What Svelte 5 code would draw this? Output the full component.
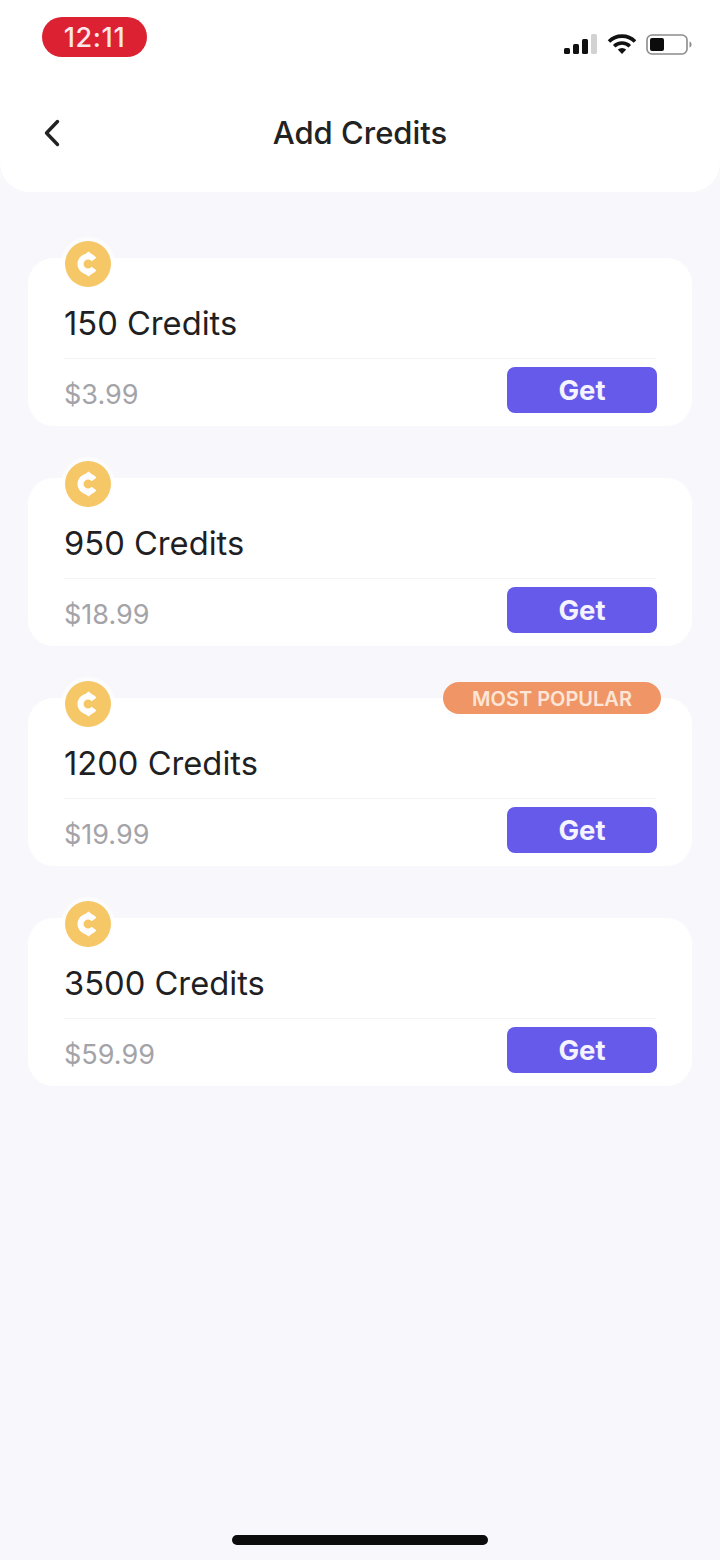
<script>
  const plans = [
    { credits: 150, price: '$3.99' },
    { credits: 950, price: '$18.99' },
    { credits: 1200, price: '$19.99', popular: true },
    { credits: 3500, price: '$59.99' }
  ];
</script>

<div class="screen">
  <header>
    <div class="status">
      <span class="time">12:11</span>
      <div class="indicators">
        <svg width="34" height="22" viewBox="0 0 34 22">
          <rect x="0" y="15" width="6" height="6" rx="1.500" fill="#111" />
          <rect x="9" y="11" width="6" height="10" rx="1.500" fill="#111" />
          <rect x="18" y="6" width="6" height="15" rx="1.500" fill="#111" />
          <rect x="27" y="1" width="6" height="20" rx="1.500" fill="#d2d2d2" />
        </svg>
        <svg width="30" height="22" viewBox="0 0 30 22">
          <path d="M2 8.500a18.500 18.500 0 0 1 26 0" fill="none" stroke="#111" stroke-width="3.600" />
          <path d="M7.200 13.200a11 11 0 0 1 15.600 0" fill="none" stroke="#111" stroke-width="3.600" />
          <path d="M10.800 16.600a6 6 0 0 1 8.400 0L15 21z" fill="#111" />
        </svg>
        <svg width="46" height="22" viewBox="0 0 46 22">
          <rect x="1" y="2" width="40" height="19" rx="5" fill="#fff" stroke="#8c8c8c" stroke-width="1.600" />
          <rect x="4" y="5" width="14" height="13" rx="2" fill="#0c0c0c" />
          <path d="M43.500 8.500c1.600.5 2 1.600 2 3s-.4 2.500-2 3z" fill="#8c8c8c" />
        </svg>
      </div>
    </div>
    <div class="nav">
      <button class="back" aria-label="Back">
        <svg width="16" height="28" viewBox="0 0 16 28">
          <path d="M13.500 2.500 2.500 14l11 11.500" fill="none" stroke="#222" stroke-width="3.400" stroke-linecap="round" stroke-linejoin="round" />
        </svg>
      </button>
      <h1>Add Credits</h1>
    </div>
  </header>

  <main>
    {#each plans as p}
      <section class="card">
        <div class="coin">
          <svg width="46" height="46" viewBox="0 0 46 46">
            <circle cx="23" cy="23" r="23" fill="#f5c766" />
            <path d="M29 18.500 A7.500 7.500 0 1 0 29 27.500" fill="none" stroke="#fff" stroke-width="6" />
            <path d="M20.500 13 23.500 10.500 26.500 13z" fill="#fff" />
            <path d="M20.500 33 23.500 35.500 26.500 33z" fill="#fff" />
          </svg>
        </div>
        {#if p.popular}
          <span class="badge">MOST POPULAR</span>
        {/if}
        <h2>{p.credits} Credits</h2>
        <div class="row">
          <span class="price">{p.price}</span>
          <button class="get">Get</button>
        </div>
      </section>
    {/each}
  </main>

  <div class="home"></div>
</div>

<style>
  :global(body) { margin: 0; background: #f8f7fb; }
  .screen {
    height: 1560px;
    display: flex;
    flex-direction: column;
    font-family: Inter, "Liberation Sans", sans-serif;
    background: #f8f7fb;
    overflow: hidden;
  }
  header {
    height: 192px;
    box-sizing: border-box;
    padding: 17px 28px 0 42px;
    background: #fff;
    border-radius: 0 0 30px 30px;
  }
  .status { display: flex; justify-content: space-between; align-items: flex-start; height: 40px; }
  .time {
    width: 105px;
    height: 40px;
    border-radius: 20px;
    background: #dc2132;
    color: #fbe6e8;
    font-size: 27px;
    font-weight: 500;
    letter-spacing: 0.6px;
    line-height: 42px;
    text-align: center;
  }
  .indicators { display: flex; align-items: center; gap: 9px; margin-top: 16px; }
  .indicators svg { display: block; }
  .nav { position: relative; margin-top: 56px; height: 40px; margin-left: -42px; margin-right: -28px; }
  .back {
    position: absolute;
    left: 44px;
    top: 6px;
    padding: 0;
    border: none;
    background: none;
  }
  .back svg { display: block; }
  h1 {
    margin: 0;
    text-align: center;
    font-size: 31px;
    line-height: 40px;
    font-weight: 500;
    color: #222;
  }
  main {
    flex: 1;
    padding: 66px 28px 0;
    display: flex;
    flex-direction: column;
    gap: 52px;
  }
  .card {
    position: relative;
    height: 168px;
    box-sizing: border-box;
    padding: 45px 36px 0;
    background: #fff;
    border-radius: 26px;
  }
  .coin {
    position: absolute;
    left: 37px;
    top: -17px;
    width: 46px;
    height: 46px;
    border-radius: 50%;
    box-shadow: 0 0 0 4px rgba(255, 255, 255, 0.6);
  }
  .coin svg { display: block; }
  .badge {
    position: absolute;
    right: 31px;
    top: -16px;
    width: 218px;
    height: 32px;
    border-radius: 16px;
    background: #f09666;
    color: #fde6d8;
    font-size: 20px;
    font-weight: 600;
    line-height: 35px;
    text-align: center;
  }
  h2 {
    margin: 0;
    height: 55px;
    font-size: 32.700px;
    line-height: 40px;
    font-weight: 400;
    color: #1f1f24;
    border-bottom: 1px solid #f3f2f6;
  }
  .row {
    display: flex;
    justify-content: space-between;
    align-items: flex-start;
    padding-top: 8px;
    margin-right: -1px;
  }
  .price {
    padding-top: 10px;
    font-size: 27px;
    line-height: 36px;
    color: #a3a3a8;
  }
  .get {
    width: 150px;
    height: 46px;
    padding: 0;
    border: none;
    border-radius: 8px;
    background: #655ae9;
    color: #f4f3ff;
    font-family: inherit;
    font-size: 27.500px;
    font-weight: 700;
  }
  .home {
    width: 256px;
    height: 10px;
    margin: 0 auto 15px;
    border-radius: 5px;
    background: #0c0c0c;
  }
</style>
